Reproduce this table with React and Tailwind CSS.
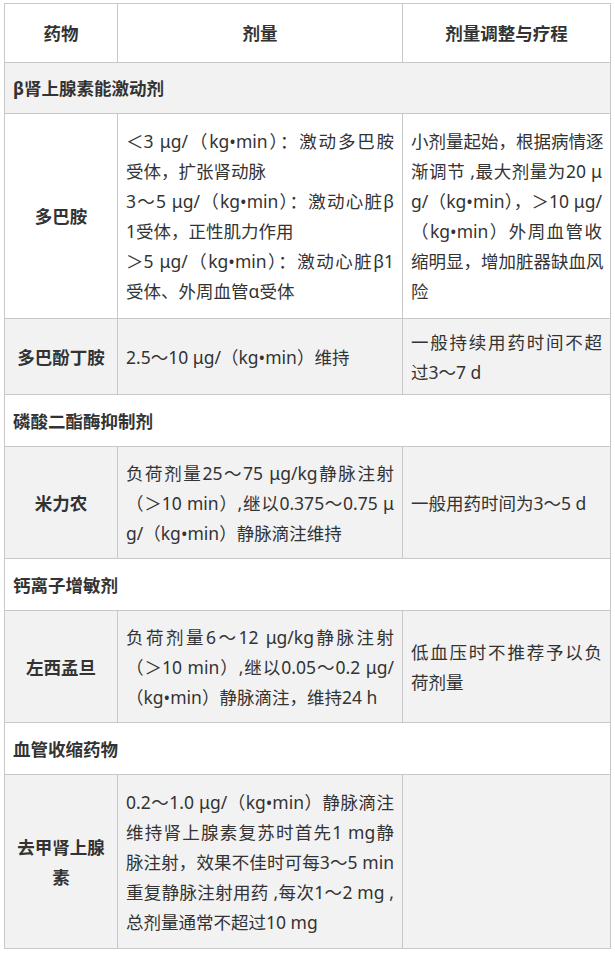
import React from "react";

const FONT = { fontFamily: '"Noto Sans", "Noto Sans CJK SC", sans-serif' };

function Lines({ lines }) {
  return (
    <div>
      {lines.map((l, i) => (
        <div
          key={i}
          className={
            l.j
              ? "whitespace-nowrap text-justify [text-align-last:justify]"
              : "whitespace-nowrap text-left"
          }
        >
          {l.t}
        </div>
      ))}
    </div>
  );
}

const j = (t) => ({ t, j: true });
const n = (t) => ({ t, j: false });

const rows = [
  { type: "section", title: "β肾上腺素能激动剂", h: "h-[51px]", bg: "bg-[#f2f2f2]" },
  {
    type: "drug",
    name: "多巴胺",
    h: "h-[205px]",
    bg: "bg-white",
    dose: [
      j("＜3 μg/（kg•min）：激动多巴胺"),
      n("受体，扩张肾动脉"),
      j("3～5 μg/（kg•min）：激动心脏β"),
      n("1受体，正性肌力作用"),
      j("＞5 μg/（kg•min）：激动心脏β1"),
      n("受体、外周血管α受体"),
    ],
    adj: [
      j("小剂量起始，根据病情逐"),
      j("渐调节 ,最大剂量为20 μ"),
      j("g/（kg•min），＞10 μg/"),
      j("（kg•min）外周血管收"),
      j("缩明显，增加脏器缺血风"),
      n("险"),
    ],
  },
  {
    type: "drug",
    name: "多巴酚丁胺",
    h: "h-[76px]",
    bg: "bg-[#f2f2f2]",
    dose: [n("2.5～10 μg/（kg•min）维持")],
    adj: [j("一般持续用药时间不超"), n("过3～7 d")],
  },
  { type: "section", title: "磷酸二酯酶抑制剂", h: "h-[52px]", bg: "bg-white" },
  {
    type: "drug",
    name: "米力农",
    h: "h-[112px]",
    bg: "bg-[#f2f2f2]",
    dose: [
      j("负荷剂量25～75 μg/kg静脉注射"),
      j("（＞10 min）,继以0.375～0.75 μ"),
      n("g/（kg•min）静脉滴注维持"),
    ],
    adj: [n("一般用药时间为3～5 d")],
  },
  { type: "section", title: "钙离子增敏剂", h: "h-[52px]", bg: "bg-white" },
  {
    type: "drug",
    name: "左西孟旦",
    h: "h-[112px]",
    bg: "bg-[#f2f2f2]",
    dose: [
      j("负荷剂量6～12 μg/kg静脉注射"),
      j("（＞10 min）,继以0.05～0.2 μg/"),
      n("（kg•min）静脉滴注，维持24 h"),
    ],
    adj: [j("低血压时不推荐予以负"), n("荷剂量")],
  },
  { type: "section", title: "血管收缩药物", h: "h-[52px]", bg: "bg-white" },
  {
    type: "drug",
    name: "去甲肾上腺素",
    h: "h-[174px]",
    bg: "bg-[#f2f2f2]",
    dose: [
      j("0.2～1.0 μg/（kg•min）静脉滴注"),
      j("维持肾上腺素复苏时首先1 mg静"),
      j("脉注射，效果不佳时可每3～5 min"),
      j("重复静脉注射用药 ,每次1～2 mg ,"),
      n("总剂量通常不超过10 mg"),
    ],
    adj: [],
  },
];

export default function App() {
  return (
    <div className="min-h-[955px] w-[615px] bg-white pl-[4px] pt-[3px]" style={FONT}>
      <table className="w-[606px] table-fixed border-collapse text-[17.5px] leading-[30px] text-[#333]">
        <colgroup>
          <col className="w-[113px]" />
          <col className="w-[285px]" />
          <col className="w-[208px]" />
        </colgroup>
        <tbody>
          <tr className="h-[59px] bg-white">
            <th className="border border-[#c8c8c8] px-2 text-center align-middle font-bold">药物</th>
            <th className="border border-[#c8c8c8] px-2 text-center align-middle font-bold">剂量</th>
            <th className="border border-[#c8c8c8] px-2 text-center align-middle font-bold">剂量调整与疗程</th>
          </tr>
          {rows.map((r, i) =>
            r.type === "section" ? (
              <tr key={i} className={`${r.h} ${r.bg}`}>
                <td colSpan={3} className="border border-[#c8c8c8] px-2 align-middle font-bold">
                  {r.title}
                </td>
              </tr>
            ) : (
              <tr key={i} className={`${r.h} ${r.bg}`}>
                <td className="border border-[#c8c8c8] px-2 text-center align-middle font-bold">
                  {r.name}
                </td>
                <td className="border border-[#c8c8c8] px-2 align-middle">
                  <Lines lines={r.dose} />
                </td>
                <td className="border border-[#c8c8c8] px-2 align-middle">
                  <Lines lines={r.adj} />
                </td>
              </tr>
            )
          )}
        </tbody>
      </table>
    </div>
  );
}
